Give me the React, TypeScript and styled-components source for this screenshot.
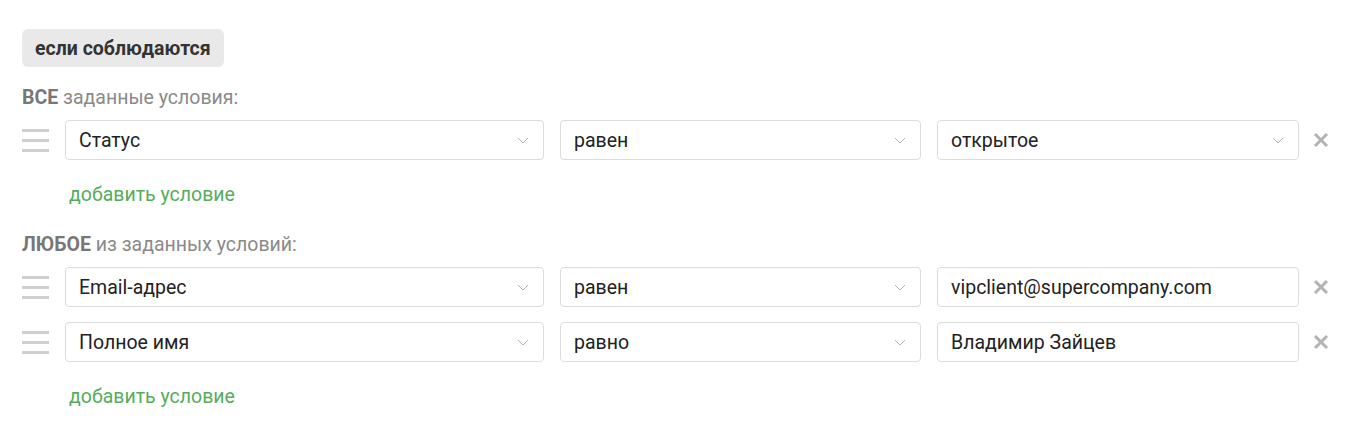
import React from "react";
import styled, { createGlobalStyle } from "styled-components";

const GlobalStyle = createGlobalStyle`
  body {
    margin: 0;
    background: #fff;
    font-family: Roboto, "Noto Sans", sans-serif;
  }
`;

const Page = styled.div`
  padding: 29px 22px 0 22px;
  display: flex;
  flex-direction: column;
  align-items: flex-start;
`;

const Badge = styled.div`
  background: #e9e9e9;
  border-radius: 6px;
  height: 38px;
  padding: 0 13px;
  display: flex;
  align-items: center;
  font-size: 19.5px;
  font-weight: 700;
  color: #333;
`;

const GroupLabel = styled.div<{ $top: number }>`
  margin-top: ${(p) => p.$top}px;
  font-size: 19.5px;
  line-height: 20px;
  color: #8a8a8a;
  b {
    color: #777;
    font-weight: 700;
  }
`;

const Rows = styled.div`
  margin-top: 12px;
  display: flex;
  flex-direction: column;
  gap: 15px;
`;

const Row = styled.div`
  display: flex;
  align-items: center;
  height: 40px;
`;

const Handle = styled.div`
  width: 27px;
  display: flex;
  flex-direction: column;
  gap: 7px;
  margin-right: 16px;
  cursor: grab;
  span {
    height: 3px;
    background: #cfcfcf;
  }
`;

const Field = styled.div<{ $width: number }>`
  width: ${(p) => p.$width}px;
  box-sizing: border-box;
  height: 40px;
  border: 1px solid #dcdcdc;
  border-radius: 4px;
  padding: 0 14px 0 13px;
  margin-right: 16px;
  display: flex;
  align-items: center;
  justify-content: space-between;
  font-size: 19.5px;
  color: #222;
`;

const Remove = styled.button`
  border: 0;
  background: none;
  padding: 0;
  margin-left: -2px;
  width: 16px;
  height: 16px;
  cursor: pointer;
  display: flex;
`;

const AddLink = styled.a`
  margin: 23px 0 0 47px;
  font-size: 19.5px;
  line-height: 24px;
  color: #55ad59;
  text-decoration: none;
  cursor: pointer;
`;

const Chevron = () => (
  <svg width="12" height="7" viewBox="0 0 12 7">
    <polyline points="1,1 6,6 11,1" fill="none" stroke="#b0b0b0" strokeWidth="1" />
  </svg>
);

const Cross = () => (
  <svg width="16" height="16" viewBox="0 0 16 16">
    <path d="M2 2 L14 14 M14 2 L2 14" stroke="#b3b3b3" strokeWidth="3" />
  </svg>
);

interface Condition {
  field: string;
  op: string;
  value: string;
  valueSelect?: boolean;
}

const ConditionRow = ({ c }: { c: Condition }) => (
  <Row>
    <Handle>
      <span />
      <span />
      <span />
    </Handle>
    <Field $width={479}>
      {c.field}
      <Chevron />
    </Field>
    <Field $width={361}>
      {c.op}
      <Chevron />
    </Field>
    <Field $width={362}>
      {c.value}
      {c.valueSelect ? <Chevron /> : null}
    </Field>
    <Remove>
      <Cross />
    </Remove>
  </Row>
);

const allConditions: Condition[] = [
  { field: "Статус", op: "равен", value: "открытое", valueSelect: true }
];

const anyConditions: Condition[] = [
  { field: "Email-адрес", op: "равен", value: "vipclient@supercompany.com" },
  { field: "Полное имя", op: "равно", value: "Владимир Зайцев" }
];

const App = () => (
  <Page>
    <GlobalStyle />
    <Badge>если соблюдаются</Badge>
    <GroupLabel $top={21}>
      <b>ВСЕ</b> заданные условия:
    </GroupLabel>
    <Rows>
      {allConditions.map((c, i) => (
        <ConditionRow key={i} c={c} />
      ))}
    </Rows>
    <AddLink>добавить условие</AddLink>
    <GroupLabel $top={28}>
      <b>ЛЮБОЕ</b> из заданных условий:
    </GroupLabel>
    <Rows>
      {anyConditions.map((c, i) => (
        <ConditionRow key={i} c={c} />
      ))}
    </Rows>
    <AddLink>добавить условие</AddLink>
  </Page>
);

export default App;
